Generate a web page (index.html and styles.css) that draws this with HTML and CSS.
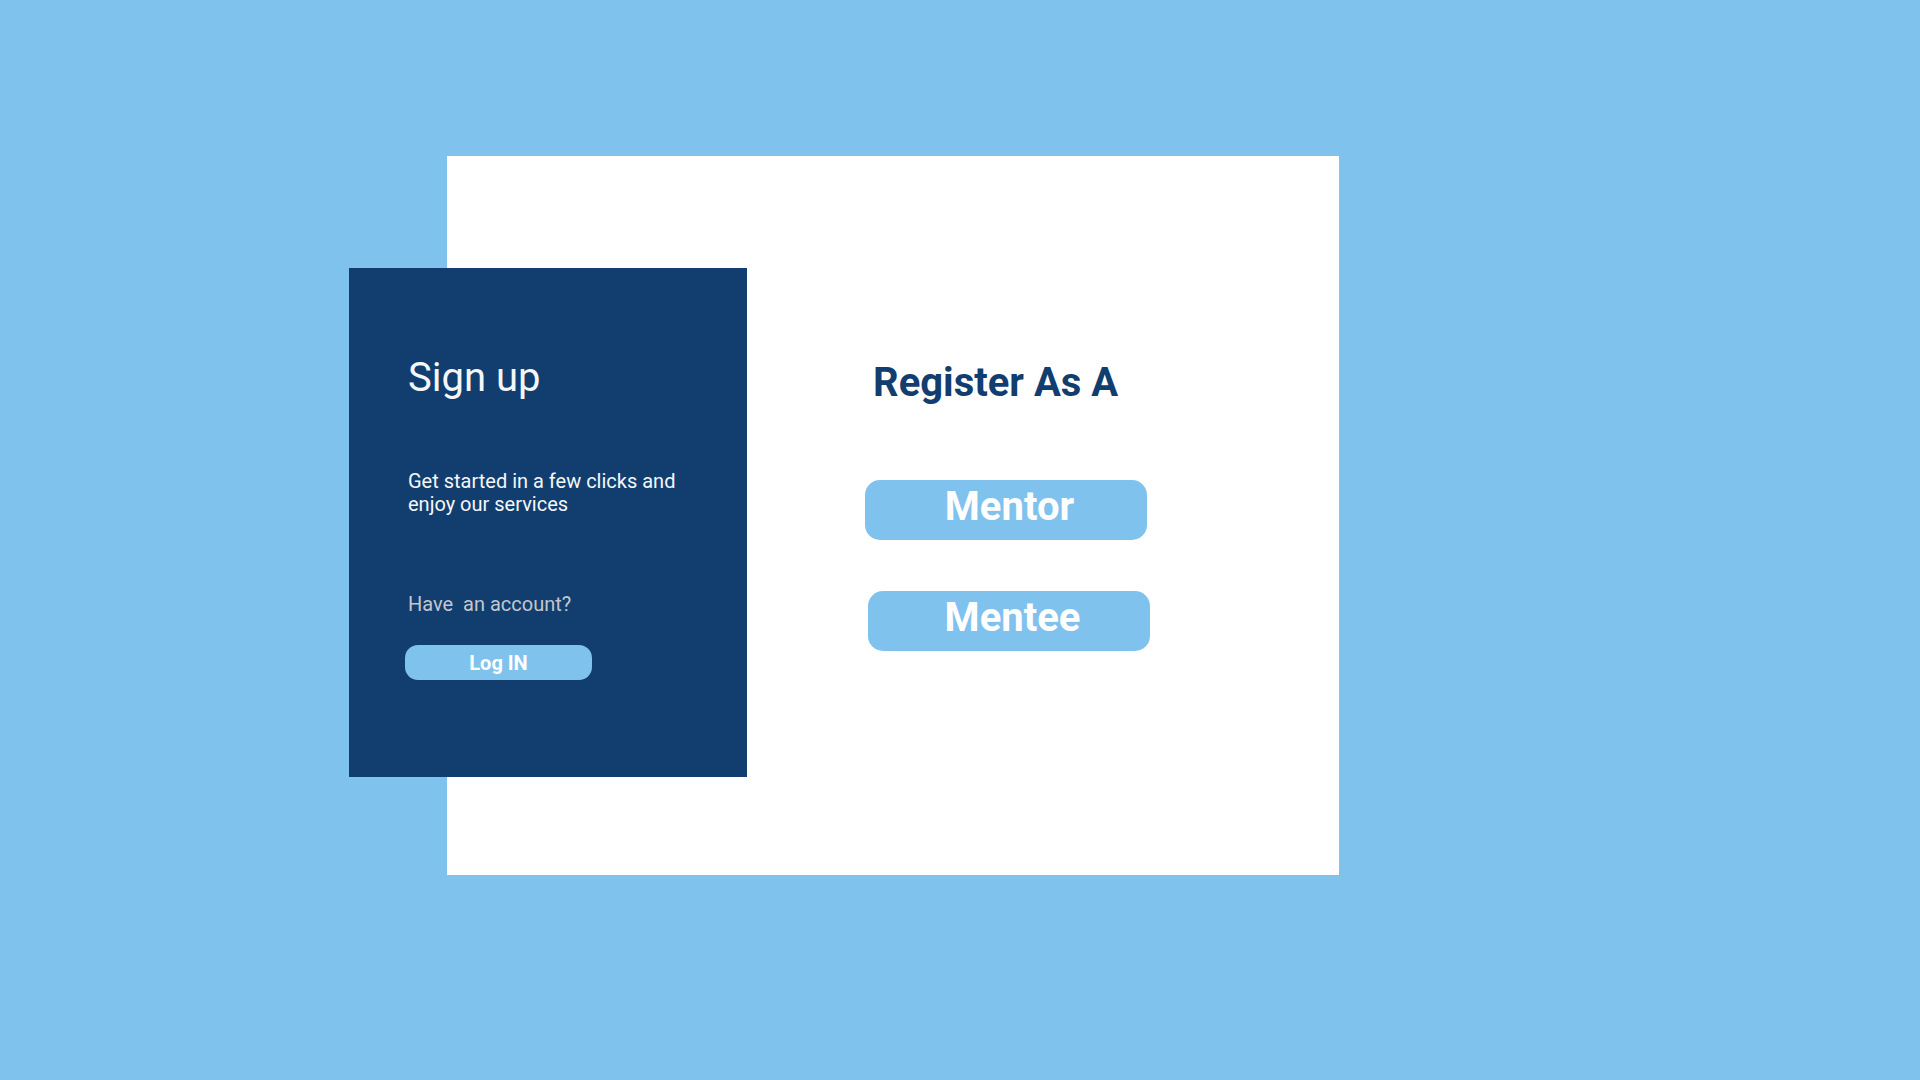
FILE: index.html
```html
<!DOCTYPE html>
<html lang="en">
<head>
<meta charset="utf-8">
<title>Sign up</title>
<link rel="stylesheet" href="styles.css">
</head>
<body>
  <main class="card">
    <section class="panel">
      <h1 class="panel-title">Sign up</h1>
      <p class="panel-desc">Get started in a few clicks and<br>enjoy our services</p>
      <p class="panel-question">Have&nbsp; an account?</p>
      <button class="login-btn">Log IN</button>
    </section>
    <section class="register">
      <h2 class="register-title">Register As A</h2>
      <button class="role-btn role-mentor">Mentor</button>
      <button class="role-btn role-mentee">Mentee</button>
    </section>
  </main>
</body>
</html>
```
FILE: styles.css
```css
* { box-sizing: border-box; }
html, body {
  margin: 0;
  padding: 0;
}
body {
  background: #80c2ee;
  width: 1920px;
  height: 1080px;
  overflow: hidden;
  font-family: Roboto, "Liberation Sans", sans-serif;
  padding-top: 156px;
  padding-left: 447px;
}
.card {
  width: 892px;
  height: 719px;
  background: #ffffff;
  display: flex;
  align-items: flex-start;
}
.panel {
  width: 398px;
  height: 509px;
  margin-left: -98px;
  margin-top: 112px;
  background: #113e6f;
  padding: 90px 0 0 59px;
  display: flex;
  flex-direction: column;
  align-items: flex-start;
}
.panel-title {
  margin: 0;
  font-size: 40px;
  line-height: 40px;
  font-weight: 400;
  color: #f4f6f9;
}
.panel-desc {
  margin: 72px 0 0;
  font-size: 20px;
  line-height: 23px;
  color: #f4f6f9;
}
.panel-question {
  margin: 77px 0 0;
  font-size: 20px;
  line-height: 23px;
  color: #c3c7cd;
}
.login-btn {
  margin: 29px 0 0 -3px;
  width: 187px;
  height: 35px;
  border: none;
  border-radius: 13px;
  background: #80c2ee;
  color: #ffffff;
  font-family: Roboto, "Liberation Sans", sans-serif;
  font-weight: 700;
  font-size: 20px;
  line-height: 34px;
  padding: 1px 0 0;
}
.register {
  margin-left: 118px;
  padding-top: 207px;
  display: flex;
  flex-direction: column;
  align-items: flex-start;
}
.register-title {
  margin: 0 0 0 8px;
  font-size: 40px;
  line-height: 40px;
  font-weight: 700;
  color: #113e6f;
}
.role-btn {
  width: 282px;
  height: 60px;
  border: none;
  border-radius: 15px;
  background: #80c2ee;
  color: #ffffff;
  font-family: Roboto, "Liberation Sans", sans-serif;
  font-weight: 700;
  font-size: 40px;
  line-height: 54px;
  padding: 0 0 6px 7px;
}
.role-mentor { margin-top: 77px; }
.role-mentee { margin-top: 51px; margin-left: 3px; }
```
